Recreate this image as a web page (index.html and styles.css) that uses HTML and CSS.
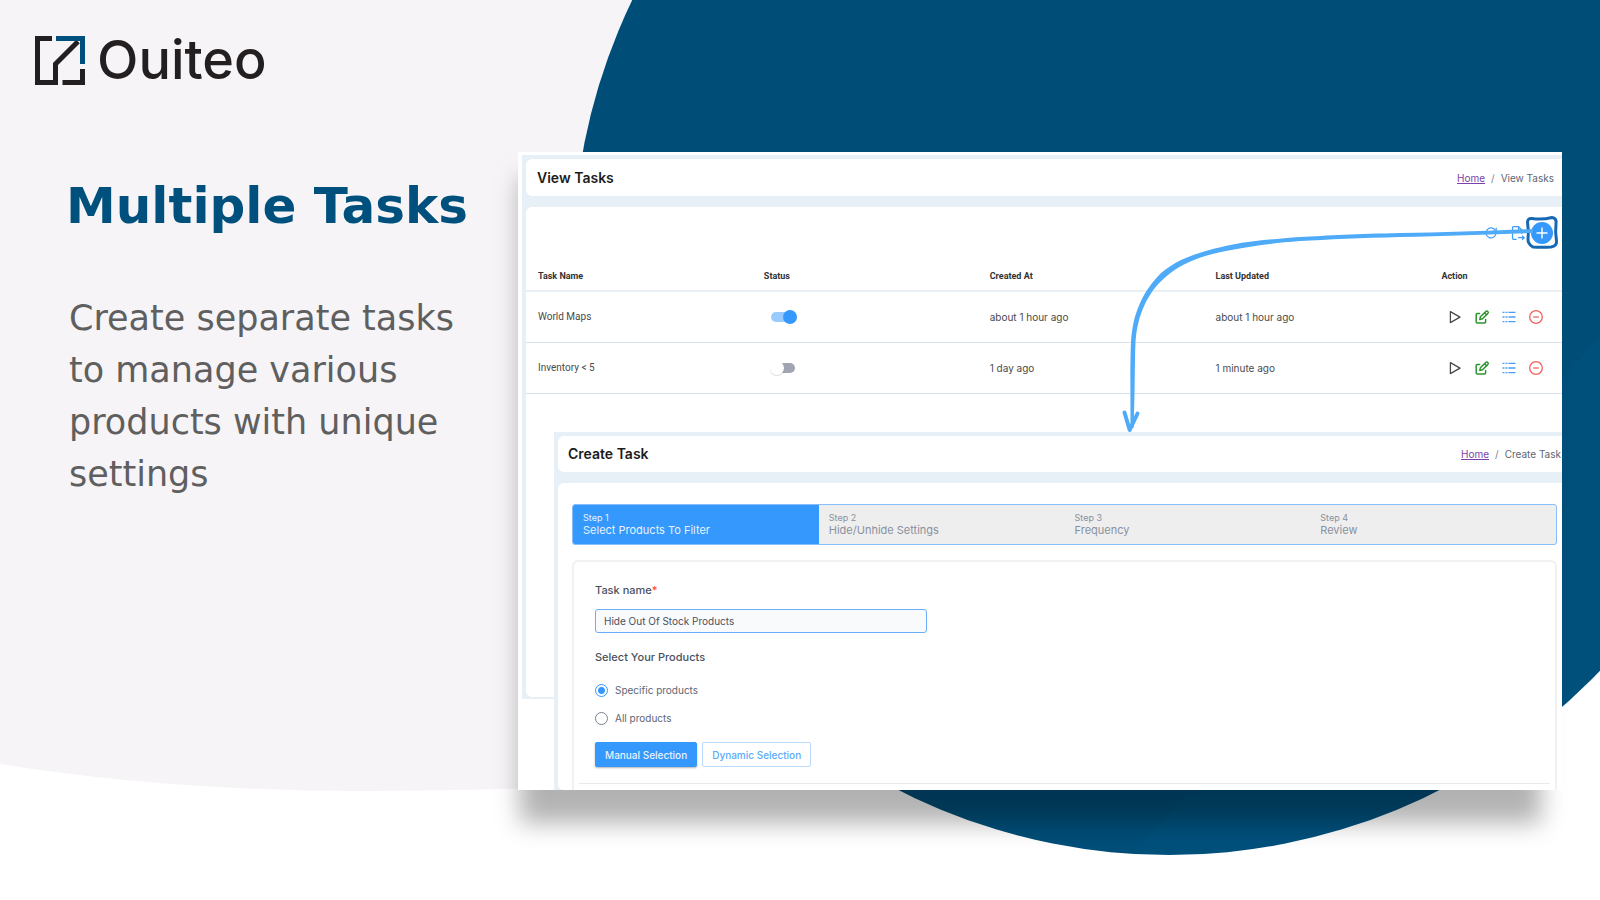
FILE: index.html
```html
<!DOCTYPE html>
<html lang="en">
<head>
<meta charset="utf-8">
<title>Ouiteo – Multiple Tasks</title>
<link rel="stylesheet" href="styles.css">
</head>
<body>
<svg class="symbols" aria-hidden="true">
  <symbol id="play" viewBox="0 0 16 16"><path d="M3.4 2.6v11l9.600-5.500z" fill="none" stroke="#4a4a4a" stroke-width="1.3" stroke-linejoin="round"/></symbol>
  <symbol id="edit" viewBox="0 0 16 16"><g fill="none" stroke="#2c942f" stroke-width="1.5" stroke-linecap="round" stroke-linejoin="round"><path d="M5.6 4.4H3.2a1 1 0 0 0-1 1v7.6a1 1 0 0 0 1 1h7.4a1 1 0 0 0 1-1v-2.6"/><path d="M5.8 10.4l.6-2.7 5.4-5.2a1.4 1.4 0 0 1 2 2L8.5 9.8z"/><path d="M10.6 3.8l1.9 1.9"/></g></symbol>
  <symbol id="list" viewBox="0 0 16 16"><g stroke="#4a9cf5" stroke-width="1.3"><path d="M1.500 3.400h2M4.500 3.400h2M7.500 3.400h7M1.500 8h2M4.500 8h2M7.500 8h7M1.500 12.600h2M4.500 12.600h2M7.500 12.600h7"/></g></symbol>
  <symbol id="remove" viewBox="0 0 16 16"><g fill="none" stroke="#f2635f" stroke-width="1.3"><circle cx="8" cy="8" r="6.3"/><path d="M5.2 8h5.6"/></g></symbol>
</svg>
<div class="page">
  <svg class="backdrop" viewBox="0 0 1600 900" preserveAspectRatio="none" aria-hidden="true">
    <linearGradient id="disc-fill" gradientUnits="userSpaceOnUse" x1="1539" y1="320" x2="1623" y2="396">
      <stop offset="0.5" stop-color="#004e78"/><stop offset="0.5" stop-color="#00507c"/>
    </linearGradient>
    <path class="mist" d="M0 0H1200V700Q860 791 360 791Q170 791 0 764z"/>
    <circle cx="1169" cy="259" r="596" fill="url(#disc-fill)"/>
  </svg>
  <section class="intro">
    <div class="brand">
      <svg class="logo" viewBox="0 0 50 49" aria-hidden="true">
        <g fill="none" stroke="#231f20" stroke-width="5">
          <path d="M17 2.5H2.500V46.500H20.500V28L43 5.500"/><path d="M27.500 46.500H47.500V33"/>
        </g>
        <path d="M21 2.500H47.500V28" fill="none" stroke="#00507d" stroke-width="5"/>
      </svg>
      <span class="brand-name">Ouiteo</span>
    </div>
    <h1 class="title">Multiple Tasks</h1>
    <p class="lead">Create separate tasks to manage various products with unique settings</p>
  </section>
  <main class="stage">
    <div class="shot">
      <section class="panel view-panel">
        <header class="panel-head">
          <h2 class="panel-title">View Tasks</h2>
          <nav class="crumbs"><a href="#home">Home</a><span class="slash">/</span><span>View Tasks</span></nav>
        </header>
        <div class="panel-body">
          <div class="toolbar">
            <button class="icon-button" type="button" aria-label="Refresh"><svg viewBox="0 0 16 16"><g fill="none" stroke="#3d99f8" stroke-width="1.2"><path d="M13 8.500A5 5 0 1 1 12.400 5.500"/><path d="M13.200 2.800V6H10"/></g></svg></button>
            <button class="icon-button" type="button" aria-label="Export"><svg viewBox="0 0 16 16"><g fill="none" stroke="#3d99f8" stroke-width="1.200"><path d="M6.500 14.300H3.500a1 1 0 0 1-1-1V2.700a1 1 0 0 1 1-1H8.500L11.800 5V9"/><path d="M8.500 1.700V5h3.300M8 12.700h6M12 10.600l2.200 2.100-2.200 2.100"/></g></svg></button>
            <button class="add-button" type="button" aria-label="Add task"><svg viewBox="0 0 22 22"><circle cx="11" cy="11" r="11" fill="#3598fd"/><path d="M11 5.500v11M5.500 11h11" stroke="#fff" stroke-width="1.400"/></svg></button>
          </div>
          <table class="tasks">
            <thead><tr><th>Task Name</th><th>Status</th><th>Created At</th><th>Last Updated</th><th>Action</th></tr></thead>
            <tbody>
              <tr><td class="name">World Maps</td><td><input class="switch" type="checkbox" aria-label="World Maps status" checked></td><td>about 1 hour ago</td><td>about 1 hour ago</td>
                <td><div class="actions"><button class="icon-button" type="button" aria-label="Run"><svg><use href="#play"/></svg></button><button class="icon-button" type="button" aria-label="Edit"><svg><use href="#edit"/></svg></button><button class="icon-button" type="button" aria-label="Log"><svg><use href="#list"/></svg></button><button class="icon-button" type="button" aria-label="Delete"><svg><use href="#remove"/></svg></button></div></td></tr>
              <tr><td class="name">Inventory &lt; 5</td><td><input class="switch" type="checkbox" aria-label="Inventory status"></td><td>1 day ago</td><td>1 minute ago</td>
                <td><div class="actions"><button class="icon-button" type="button" aria-label="Run"><svg><use href="#play"/></svg></button><button class="icon-button" type="button" aria-label="Edit"><svg><use href="#edit"/></svg></button><button class="icon-button" type="button" aria-label="Log"><svg><use href="#list"/></svg></button><button class="icon-button" type="button" aria-label="Delete"><svg><use href="#remove"/></svg></button></div></td></tr>
            </tbody>
          </table>
        </div>
      </section>

      <section class="panel create-panel">
        <header class="panel-head">
          <h2 class="panel-title">Create Task</h2>
          <nav class="crumbs"><a href="#home">Home</a><span class="slash">/</span><span>Create Task</span></nav>
        </header>
        <div class="panel-body">
          <ol class="steps">
            <li class="step active"><span class="step-no">Step 1</span><span class="step-name">Select Products To Filter</span></li>
            <li class="step"><span class="step-no">Step 2</span><span class="step-name">Hide/Unhide Settings</span></li>
            <li class="step"><span class="step-no">Step 3</span><span class="step-name">Frequency</span></li>
            <li class="step"><span class="step-no">Step 4</span><span class="step-name">Review</span></li>
          </ol>
          <form class="task-form">
            <div class="fields">
              <label class="field-label" for="task-name">Task name<span class="required">*</span></label>
              <input class="text-input" id="task-name" type="text" value="Hide Out Of Stock Products">
              <fieldset class="choices">
                <legend class="field-label">Select Your Products</legend>
                <label class="choice"><input class="radio" type="radio" name="scope" checked>Specific products</label>
                <label class="choice"><input class="radio" type="radio" name="scope">All products</label>
              </fieldset>
              <div class="buttons">
                <button class="button primary" type="button">Manual Selection</button>
                <button class="button outline" type="button">Dynamic Selection</button>
              </div>
            </div>
            <hr class="rule">
          </form>
        </div>
      </section>

      <svg class="arrow" viewBox="0 0 460 230" aria-hidden="true">
        <path class="frame" d="M430 8.500Q440 10 450 7.500Q455 8 454 14Q453 22 454.500 31Q455 36 449 37Q440 37.500 431 37Q426 34 426 30Q427 22 425.500 12Q426 8 430 8.500z"/>
        <path class="stroke" d="M431 19C390 20.500 340 22.500 298 23C255 24 225 25.500 198 27C172 29 150 31 131 34.500C108 39 92 44 79 50C71 54 65 58 59 63C50 72 43 82 38.500 92C32 106 30 118 29 132C28 150 28.500 180 28.500 218H31.500C33 185 32.500 155 33.500 132C34.500 118 37 107 43 94C48 84 54 75 63 67.500C69 62 75 58 82 54.500C95 48 110 43 132 39.500C150 36 172 33 198 31C225 29.500 260 28 298 27C345 26 390 24 431 23z"/>
        <path class="head" d="M22.500 202.500L27.700 220L35.500 203.500"/>
      </svg>
    </div>
  </main>
</div>
</body>
</html>
```
FILE: styles.css
```css
* { box-sizing: border-box; }
body { margin: 0; background: #fff; font-family: Inter, "Open Sans", sans-serif; }
h1, h2, p, ol, fieldset { margin: 0; padding: 0; border: 0; }
button, input { font: inherit; }
.symbols { position: absolute; width: 0; height: 0; }

.page { position: relative; display: grid; grid-template-columns: 518px minmax(0, 1fr); min-height: 100vh; overflow: hidden; }
.backdrop { position: absolute; inset: 0; width: 100%; height: 100%; }
.mist { fill: #f6f4f7; }

.intro { position: relative; padding: 34px 40px 0 35px; }
.brand { display: flex; align-items: center; gap: 12px; height: 52px; }
.logo { width: 50px; height: 49px; }
.brand-name { color: #231f20; font-size: 54px; font-weight: 500; line-height: 52px; }
.title { margin: 88px 0 0 31px; color: #00507d; font: bold 50px/64px "DejaVu Sans", sans-serif; white-space: nowrap; }
.lead { margin: 54px 0 0 34px; color: #5f5f5f; font: 35px/52px "DejaVu Sans", sans-serif; }

.stage { position: relative; z-index: 0; padding: 152px 38px 110px 0; }
.shot { position: relative; height: 638px; padding: 3px 0 0 4px; background: #fff; }
.shot::before { content: ""; position: absolute; z-index: -1; inset: 26px 21px -33px 2px; background: rgba(0, 0, 0, 0.3); filter: blur(12px); }

.panel { display: flex; flex-direction: column; gap: 11px; padding: 4px 0 2px 4px; background: #e8f0f7; }
.panel-head { display: flex; align-items: center; justify-content: space-between; flex: none; height: 37px; padding: 0 8px 0 11px; background: #fff; border-radius: 6px 0 0 6px; }
.panel-title { color: #1c1c1c; font-size: 14px; font-weight: 600; line-height: 20px; }
.crumbs { display: flex; gap: 6px; color: #5d6673; font-size: 10px; line-height: 14px; }
.crumbs a { color: #7d3fa8; }
.slash { color: #7a828d; }
.panel-body { flex: 1; background: #fff; border-radius: 6px 0 0 6px; }

.view-panel { height: 544px; }
.toolbar { display: flex; align-items: center; justify-content: flex-end; gap: 5px; height: 51px; padding-right: 9px; }
.icon-button, .add-button { flex: none; width: 16px; height: 16px; padding: 0; background: none; border: 0; }
.toolbar .icon-button + .icon-button { margin-left: 6px; }
.add-button { width: 22px; height: 22px; }
.icon-button svg, .add-button svg { display: block; width: 100%; height: 100%; }

.tasks { width: 100%; table-layout: fixed; border-collapse: collapse; color: #4b4b4b; font-size: 10px; line-height: 14px; }
.tasks th { width: 21.8%; height: 33px; padding: 4px 12px 0; color: #333; font: bold 9px/14px Roboto, sans-serif; text-align: left; border-bottom: 2px solid #e9eff5; }
.tasks th:last-child { width: auto; }
.tasks td { height: 51px; padding: 0 12px; border-bottom: 1px solid #d9e1ea; }
.tasks .name { font-family: Roboto, sans-serif; }
.actions { display: flex; gap: 11px; padding-left: 6px; }

.switch { appearance: none; display: block; position: relative; width: 24px; height: 10px; margin: 0 0 0 7px; background: #a0a5b1; border-radius: 5px; }
.switch::before { content: ""; position: absolute; top: -2px; left: -1px; width: 14px; height: 14px; background: #fff; border-radius: 50%; box-shadow: 0 1px 1px rgba(0, 0, 0, 0.15); }
.switch:checked { background: #9acbfe; }
.switch:checked::before { left: 12px; background: #3598fd; box-shadow: none; }

.create-panel { position: absolute; inset: 280px 0 0 36px; padding-bottom: 0; overflow: hidden; }
.create-panel .panel-head { height: 36px; padding: 0 1px 0 10px; }
.create-panel .panel-body { display: flex; flex-direction: column; gap: 15px; padding: 21px 5px 0 14px; }
.steps { display: grid; grid-template-columns: repeat(4, 1fr); overflow: hidden; list-style: none; background: #eee; border: 1px solid #86bdfa; border-radius: 3px; }
.step { display: flex; flex-direction: column; padding: 6px 10px 7px; color: #8a919e; line-height: 13px; }
.step.active { color: #e6f2ff; background: #3598fd; }
.step-no { font-size: 9px; }
.step-name { font-size: 11px; }

.task-form { flex: 1; padding: 0 5px; border: 2px solid #f1f1f1; border-bottom: 0; border-radius: 6px 6px 0 0; }
.fields { padding: 21px 16px 16px; }
.field-label { display: block; padding: 0; color: #4a515e; font-size: 11px; font-weight: 500; line-height: 14px; }
.required { color: #f44336; }
.text-input { display: block; width: 332px; height: 24px; margin: 12px 0 17px; padding: 0 8px; color: #4a515e; background: #f8fafc; border: 1px solid #6aaefa; border-radius: 3px; font-size: 10px; }
.choice { display: flex; align-items: center; gap: 7px; height: 14px; margin-top: 14px; color: #5d6673; font-size: 10px; }
.field-label + .choice { margin-top: 19px; }
.radio { appearance: none; width: 13px; height: 13px; margin: 0; border: 1px solid #7a828f; border-radius: 50%; }
.radio:checked { border-color: #3598fd; background: radial-gradient(circle, #3598fd 3px, transparent 4px); }
.buttons { display: flex; gap: 5px; margin-top: 17px; }
.button { height: 25px; padding: 0 9px; border: 1px solid #3598fd; border-radius: 2px; font-size: 10px; font-weight: 500; }
.primary { color: #e6f2ff; background: #3598fd; box-shadow: 0 1px 2px rgba(0, 0, 0, 0.3); }
.outline { color: #5aabfc; background: #fff; border-color: #b9dafd; }
.rule { margin: 0; border: 0; border-top: 1px solid #eaeaea; }

.arrow { position: absolute; top: 58px; right: 0; width: 460px; height: 230px; pointer-events: none; }
.arrow .stroke { fill: #4fabf8; }
.arrow .head { fill: none; stroke: #4fabf8; stroke-width: 4; stroke-linecap: round; stroke-linejoin: round; }
.arrow .frame { fill: none; stroke: #1768b3; stroke-width: 3; }
```
